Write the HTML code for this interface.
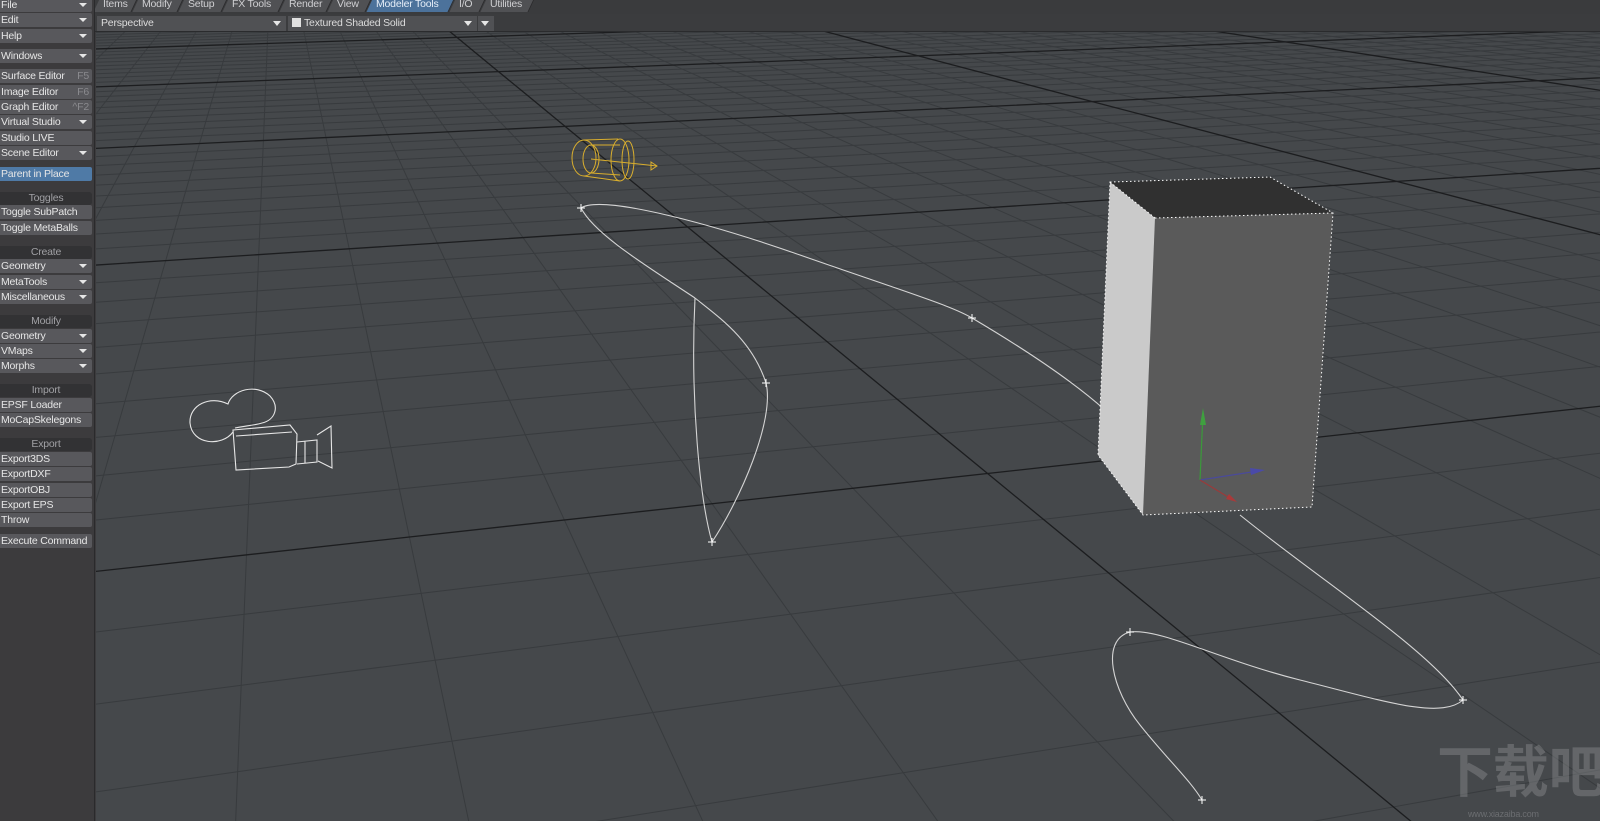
<!DOCTYPE html>
<html><head><meta charset="utf-8">
<style>
*{margin:0;padding:0;box-sizing:border-box}
html,body{width:1600px;height:821px;overflow:hidden}
body{background:#3c3b3d;font-family:"Liberation Sans","Noto Sans CJK SC",sans-serif;font-size:10.5px;letter-spacing:-0.2px;color:#e2e2e2;position:relative}
#side{position:absolute;left:0;top:0;width:95px;height:821px;background:#3c3b3d;border-right:1px solid #2a2a2c;overflow:hidden}
.b{position:absolute;left:0;width:92px;height:14px;background:#58585c;border-radius:0 2px 2px 0;line-height:14px;padding-left:1px;white-space:nowrap;color:#e6e6e6;overflow:hidden}
.b.dd:after{content:"";position:absolute;right:5px;top:5px;border-left:4px solid transparent;border-right:4px solid transparent;border-top:4px solid #e6e6e6}
.b .k{position:absolute;right:3px;color:#8a8a8e}
.b.sel{background:#4f7aa6}
.h{position:absolute;left:0;width:92px;height:13px;background:#323234;color:#a0a0a4;text-align:center;line-height:13px;border-radius:0 3px 3px 0}
#tabs{position:absolute;left:95px;top:0;width:1505px;height:14px;background:#3a3b3d;overflow:hidden}
.t{position:absolute;top:-3px;height:15px;line-height:15px;background:#505154;color:#cfcfd2;padding:0 6px;border-right:1px solid #2b2b2d;transform:skewX(-25deg);white-space:nowrap}
.t span{display:inline-block;transform:skewX(25deg)}
.t.on{background:#4c729b;color:#e6eef8}
#bar{position:absolute;left:95px;top:14px;width:1505px;height:18px;background:#3b3c3e;border-bottom:1px solid #2a2b2d}
.d{position:absolute;top:2px;height:15px;background:#505154;line-height:15px;padding-left:4px;color:#dcdcdc;white-space:nowrap}
.d:after{content:"";position:absolute;right:5px;top:5px;border-left:4px solid transparent;border-right:4px solid transparent;border-top:5px solid #e6e6e6}
#vp{position:absolute;left:96px;top:32px;width:1504px;height:789px;background:#45484b;overflow:hidden}
</style></head><body>
<div id="side">
<div class="b dd" style="top:-2px">File</div>
<div class="b dd" style="top:13px">Edit</div>
<div class="b dd" style="top:29px">Help</div>
<div class="b dd" style="top:49px">Windows</div>
<div class="b" style="top:69px">Surface Editor<span class="k">F5</span></div>
<div class="b" style="top:85px">Image Editor<span class="k">F6</span></div>
<div class="b" style="top:100px">Graph Editor<span class="k">^F2</span></div>
<div class="b dd" style="top:115px">Virtual Studio</div>
<div class="b" style="top:131px">Studio LIVE</div>
<div class="b dd" style="top:146px">Scene Editor</div>
<div class="b sel" style="top:167px">Parent in Place</div>
<div class="h" style="top:192px">Toggles</div>
<div class="b" style="top:205px">Toggle SubPatch</div>
<div class="b" style="top:221px">Toggle MetaBalls</div>
<div class="h" style="top:246px">Create</div>
<div class="b dd" style="top:259px">Geometry</div>
<div class="b dd" style="top:275px">MetaTools</div>
<div class="b dd" style="top:290px">Miscellaneous</div>
<div class="h" style="top:315px">Modify</div>
<div class="b dd" style="top:329px">Geometry</div>
<div class="b dd" style="top:344px">VMaps</div>
<div class="b dd" style="top:359px">Morphs</div>
<div class="h" style="top:384px">Import</div>
<div class="b" style="top:398px">EPSF Loader</div>
<div class="b" style="top:413px">MoCapSkelegons</div>
<div class="h" style="top:438px">Export</div>
<div class="b" style="top:452px">Export3DS</div>
<div class="b" style="top:467px">ExportDXF</div>
<div class="b" style="top:483px">ExportOBJ</div>
<div class="b" style="top:498px">Export EPS</div>
<div class="b" style="top:513px">Throw</div>
<div class="b" style="top:534px">Execute Command</div>
</div>
<div id="tabs">
<div class="t" style="left:2px;width:38px"><span>Items</span></div>
<div class="t" style="left:41px;width:45px"><span>Modify</span></div>
<div class="t" style="left:87px;width:43px"><span>Setup</span></div>
<div class="t" style="left:131px;width:56px"><span>FX Tools</span></div>
<div class="t" style="left:188px;width:47px"><span>Render</span></div>
<div class="t" style="left:236px;width:38px"><span>View</span></div>
<div class="t on" style="left:275px;width:82px"><span>Modeler Tools</span></div>
<div class="t" style="left:358px;width:30px"><span>I/O</span></div>
<div class="t" style="left:389px;width:48px"><span>Utilities</span></div>
</div>
<div id="bar">
<div class="d" style="left:2px;width:189px">Perspective</div>
<div class="d" style="left:193px;width:189px"><span style="display:inline-block;width:9px;height:9px;background:#e0e0e0;margin-right:3px;vertical-align:-1px"></span>Textured Shaded Solid</div>
<div class="d" style="left:383px;width:16px"></div>
</div>
<div id="vp">
<svg id="g" width="1504" height="789" viewBox="96 32 1504 789" style="position:absolute;left:0;top:0;display:block">
<g id="minor" stroke="#383b3e" stroke-width="1" fill="none"></g>
<g id="major" stroke="#1c1d1f" stroke-width="1.3" fill="none"></g>
<g stroke="#d4d4d4" stroke-width="1.1" fill="none">
<path d="M581,208 C600,195 700,220 800,255 S950,305 972,318 S1060,370 1105,410"/>
<path d="M581,208 C595,235 650,268 695,298"/>
<path d="M695,298 C690,400 700,500 712,542 C740,500 775,420 766,383 C752,340 720,318 695,298"/>
<path d="M1240,515 C1320,580 1430,650 1463,700 C1440,720 1380,700 1300,680 S1160,628 1130,632 C1100,640 1112,690 1140,725 S1190,780 1202,800"/>
</g>
<g stroke="#ffffff" stroke-width="1">
<path d="M577,208h8M581,204v8 M968,318h8M972,314v8 M762,383h8M766,379v8 M708,542h8M712,538v8 M1126,632h8M1130,628v8 M1459,700h8M1463,696v8 M1198,800h8M1202,796v8"/>
</g>
<polygon points="1110,182 1270,177 1333,213 1155,218" fill="#303030"/>
<polygon points="1155,218 1333,213 1312,507 1143,515" fill="#5a5a5a"/>
<polygon points="1110,182 1155,218 1143,515 1098,455" fill="#cacaca"/>
<g stroke="#ffffff" stroke-width="1" stroke-dasharray="1.5,2.5" fill="none">
<polygon points="1110,182 1270,177 1333,213 1312,507 1143,515 1098,455"/>
<path d="M1155,218 L1333,213 M1155,218 L1110,182"/>
</g>
<g stroke-width="1.2">
<line x1="1200" y1="480" x2="1203" y2="412" stroke="#3a9a3a"/>
<polygon points="1200,425 1203,408 1206,425" fill="#3fa03f"/>
<line x1="1200" y1="480" x2="1258" y2="471" stroke="#4a4a9a"/>
<polygon points="1250,468 1265,470 1251,475" fill="#4a4aa8"/>
<line x1="1200" y1="480" x2="1233" y2="500" stroke="#9a3a3a"/>
<polygon points="1226,499 1237,502 1229,494" fill="#a83a3a"/>
</g>
<g stroke="#d9ae2e" stroke-width="1" fill="none">
<ellipse cx="584" cy="158" rx="12" ry="18"/>
<ellipse cx="591" cy="159" rx="8" ry="14"/>
<ellipse cx="620" cy="160" rx="9" ry="21"/>
<ellipse cx="628" cy="160" rx="6" ry="19"/>
<path d="M584,140 L618,139 M584,176 L620,181 M591,145 L620,145 M591,173 L620,175 M591,159 L657,166"/>
<path d="M651,162 L657,166 L651,170 Z"/>
</g>
<g stroke="#e6e6e6" stroke-width="1.1" fill="none">
<path d="M233,432 C222,447 192,445 190,423 C189,405 210,395 228,404 C232,390 256,383 270,396 C280,407 275,420 262,423 C256,425 245,426 235,428"/>
<path d="M233,430 L290,425 L297,434 L296,464 L289,467 L236,470 Z"/>
<path d="M236,436 L292,432 M297,442 L317,440 L317,462 L297,464 M305,441 L305,463 M317,435 L331,426 L332,468 L318,461"/>
</g>
<text x="1437" y="792" font-family="Noto Sans CJK SC, sans-serif" font-size="56" font-weight="bold" fill="#8a8c8f" fill-opacity="0.45">下载吧</text>
<text x="1468" y="817" font-family="Liberation Sans, sans-serif" font-size="9" fill="#8a8c8f" fill-opacity="0.55">www.xiazaiba.com</text>
</svg>
</div>
<script>
(function(){
var src=[[0,0],[0,10],[10,0],[10,10]], dst=[[987.6,473.5],[687.6,227],[2061,355.6],[1396.7,181.4]];
var A=[],B=[];
for(var i=0;i<4;i++){var u=src[i][0],v=src[i][1],x=dst[i][0],y=dst[i][1];
A.push([u,v,1,0,0,0,-u*x,-v*x]);B.push(x);A.push([0,0,0,u,v,1,-u*y,-v*y]);B.push(y);}
var n=8;for(var c=0;c<n;c++){var p=c;for(var r=c+1;r<n;r++)if(Math.abs(A[r][c])>Math.abs(A[p][c]))p=r;
var t=A[c];A[c]=A[p];A[p]=t;t=B[c];B[c]=B[p];B[p]=t;
for(var r=0;r<n;r++){if(r==c)continue;var f=A[r][c]/A[c][c];for(var k=c;k<n;k++)A[r][k]-=f*A[c][k];B[r]-=f*B[c];}}
var h=[];for(var i=0;i<n;i++)h.push(B[i]/A[i][i]);
function P(u,v){var w=h[6]*u+h[7]*v+1;return [ (h[0]*u+h[1]*v+h[2])/w,(h[3]*u+h[4]*v+h[5])/w,w];}
var mi=document.getElementById('minor'),ma=document.getElementById('major'),ns='http://www.w3.org/2000/svg';
function seg(g,pts){var d='',on=false;for(var i=0;i<pts.length;i++){var q=pts[i];
if(q[2]>0.02&&Math.abs(q[0])<20000&&Math.abs(q[1])<20000){d+=(on?'L':'M')+q[0].toFixed(1)+','+q[1].toFixed(1);on=true;}else on=false;}
if(d){var e=document.createElementNS(ns,'path');e.setAttribute('d',d);g.appendChild(e);}}
var U0=-150,U1=120,V0=-30,V1=120,S=30;
for(var v=V0;v<=V1;v++){var pts=[];for(var s=0;s<=S;s++){pts.push(P(U0+(U1-U0)*s/S,v));}seg(v%10==0?ma:mi,pts);}
for(var u=U0;u<=U1;u++){var pts=[];for(var s=0;s<=S;s++){pts.push(P(u,V0+(V1-V0)*s/S));}seg(u%10==0?ma:mi,pts);}
})();
</script>
</body></html>
